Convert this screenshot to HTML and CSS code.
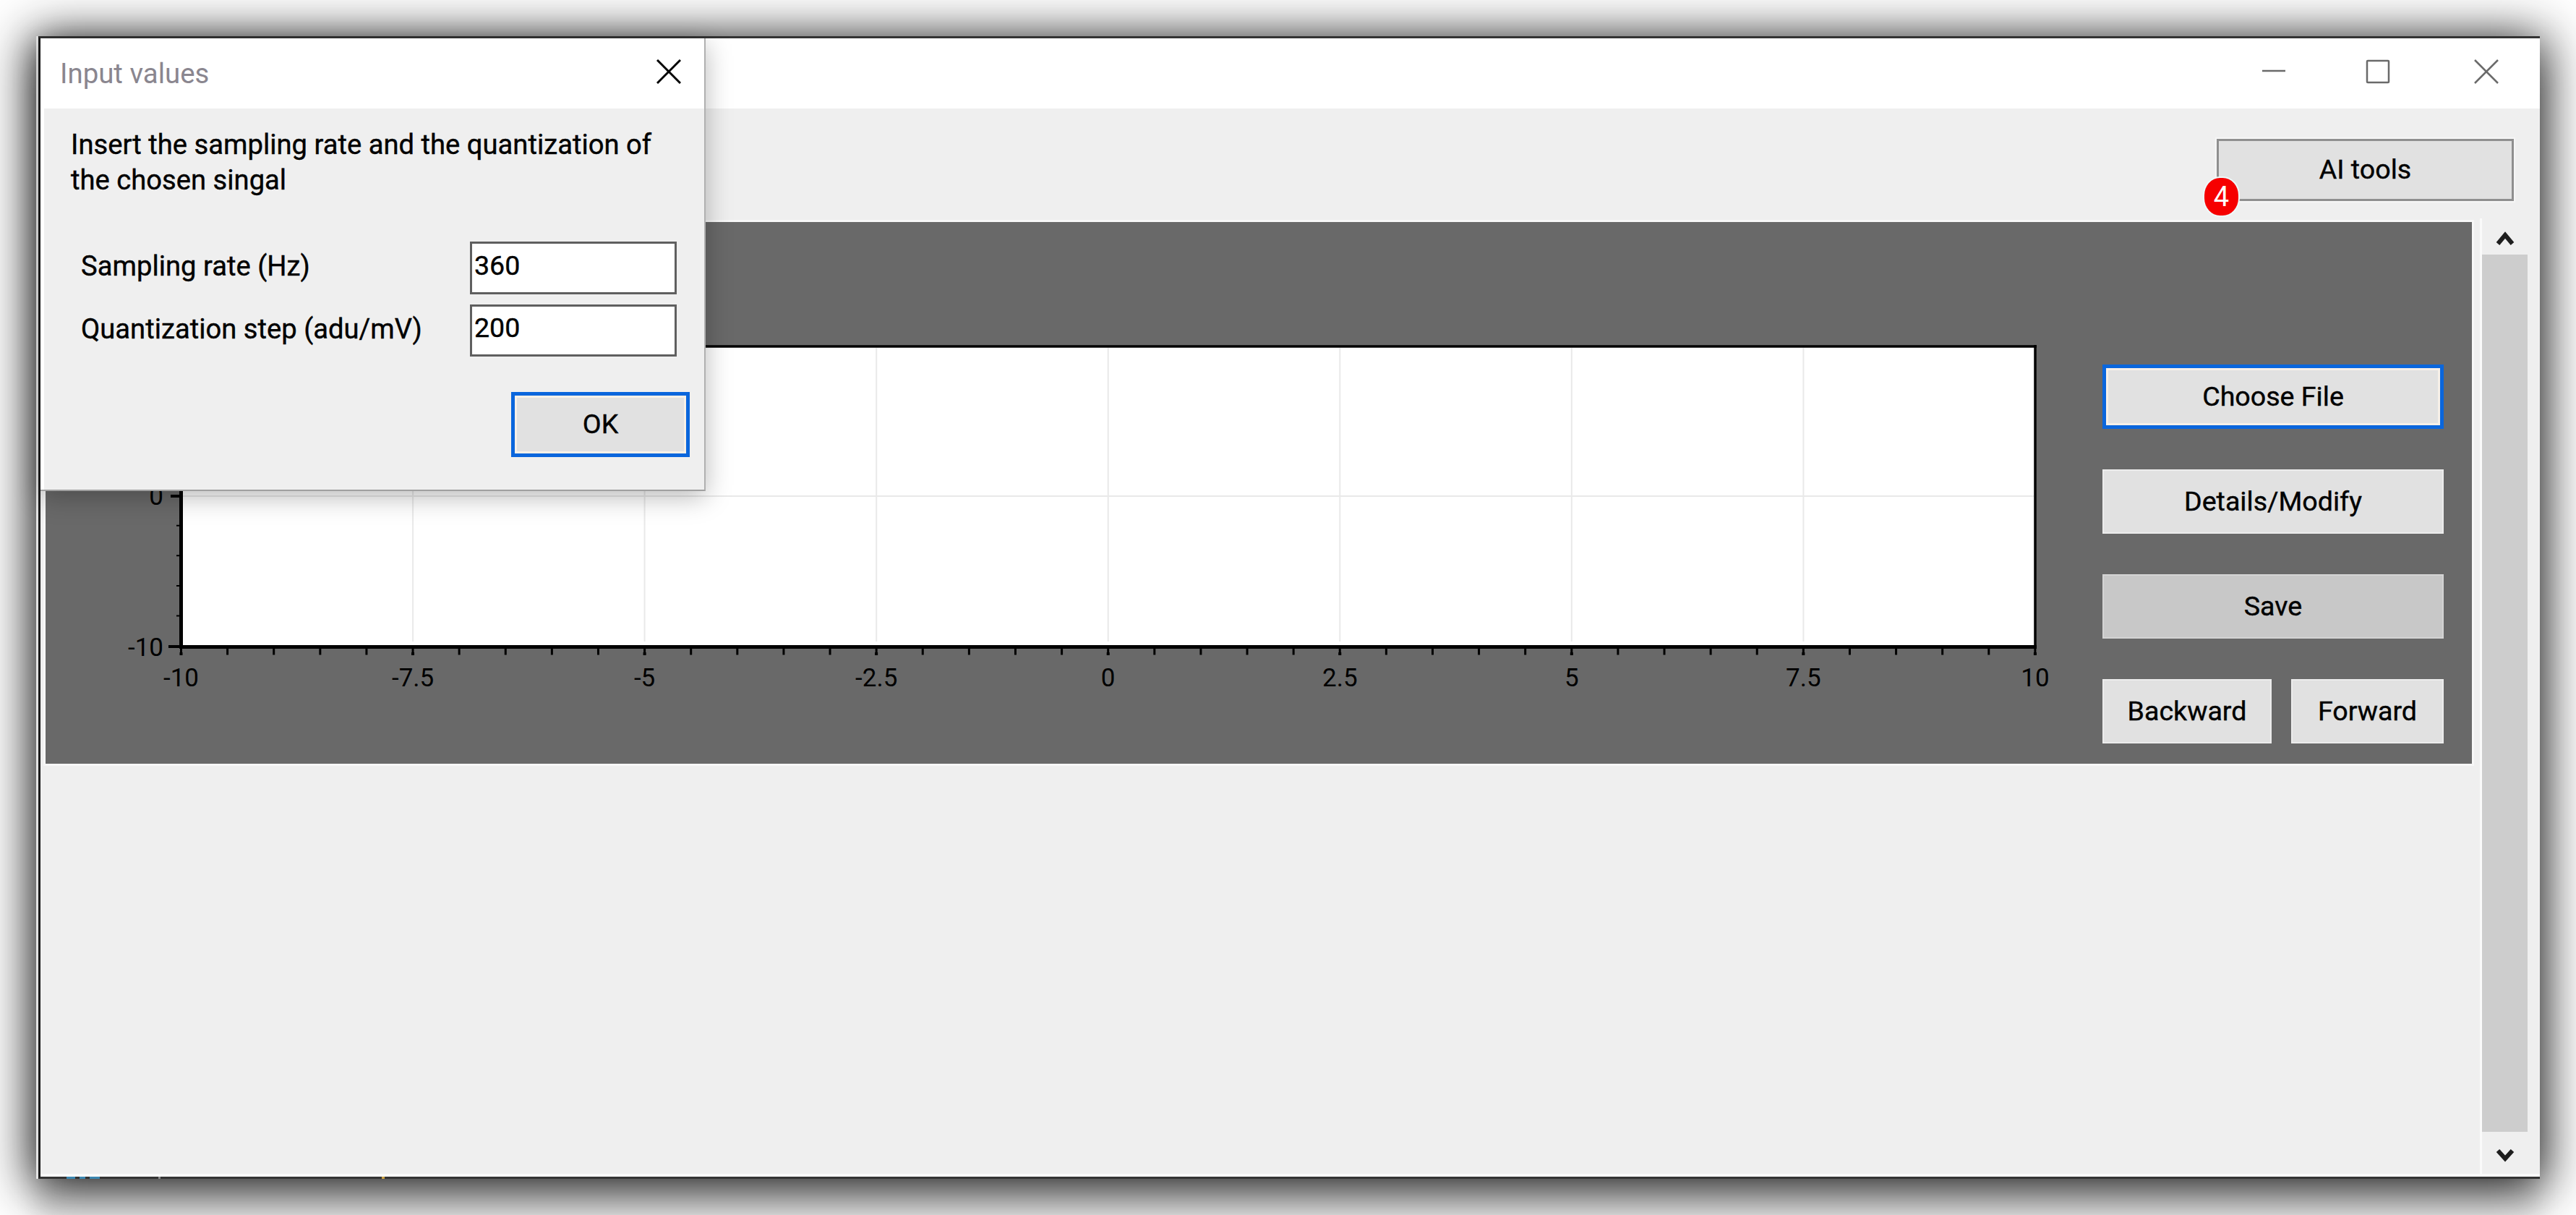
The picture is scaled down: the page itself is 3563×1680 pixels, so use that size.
FILE: index.html
```html
<!DOCTYPE html>
<html lang="en">
<head>
  <meta charset="UTF-8">
  <title>Input values</title>
  <link rel="stylesheet" href="styles.css">
</head>
<body>

  <div class="window">
    <div class="frame">

      <div class="titlebar">
        <svg class="win-icon win-min" viewBox="0 0 34 34"><line x1="1" y1="16" x2="33" y2="16"/></svg>
        <svg class="win-icon win-max" viewBox="0 0 34 34"><rect x="2" y="2" width="30" height="30" rx="1"/></svg>
        <svg class="win-icon win-close" viewBox="0 0 34 34"><line x1="1" y1="1" x2="33" y2="33"/><line x1="33" y1="1" x2="1" y2="33"/></svg>
      </div>

      <div class="client">
        <div class="toolbar">
          <button class="btn btn-ai" type="button">
            AI tools
            <span class="badge">4</span>
          </button>
        </div>

        <div class="main">
          <div class="panel">
            <svg class="chart" viewBox="1 0 2845 749">
              <rect class="plot" x="188.5" y="172" width="2564.5" height="415.5"/>

              <g class="grid">
                <line x1="509.1" y1="174" x2="509.1" y2="580"/>
                <line x1="829.6" y1="174" x2="829.6" y2="580"/>
                <line x1="1150.2" y1="174" x2="1150.2" y2="580"/>
                <line x1="1470.7" y1="174" x2="1470.7" y2="580"/>
                <line x1="1791.3" y1="174" x2="1791.3" y2="580"/>
                <line x1="2111.8" y1="174" x2="2111.8" y2="580"/>
                <line x1="2432.4" y1="174" x2="2432.4" y2="580"/>
                <line x1="191" y1="379" x2="2751" y2="379"/>
              </g>

              <g class="axes">
                <line class="axis-thick" x1="188.5" y1="170" x2="188.5" y2="590"/>
                <line class="axis-thick" x1="186" y1="587.5" x2="2755" y2="587.5"/>
                <line class="axis-thin" x1="187" y1="172" x2="2755" y2="172"/>
                <line class="axis-thin" x1="2753" y1="170" x2="2753" y2="590"/>
              </g>

              <!-- ticks are one thick dashed line each -->
              <line class="tick-minor" x1="187" y1="594" x2="2755" y2="594" stroke-width="9" stroke-dasharray="3 61.11"/>
              <line class="tick-major" x1="186.5" y1="597" x2="2755" y2="597" stroke-width="17" stroke-dasharray="4 316.55"/>
              <line class="tick-minor" x1="184" y1="587" x2="184" y2="172" stroke-width="4" stroke-dasharray="2 39.55"/>
              <line class="tick-major" x1="171" y1="587" x2="186" y2="587"/>
              <line class="tick-major" x1="174" y1="379" x2="186" y2="379"/>
              <line class="tick-major" x1="171" y1="172" x2="186" y2="172"/>

              <g class="labels-x">
                <text x="188.5" y="642">-10</text>
                <text x="509.1" y="642">-7.5</text>
                <text x="829.6" y="642">-5</text>
                <text x="1150.2" y="642">-2.5</text>
                <text x="1470.7" y="642">0</text>
                <text x="1791.3" y="642">2.5</text>
                <text x="2111.8" y="642">5</text>
                <text x="2432.4" y="642">7.5</text>
                <text x="2753" y="642">10</text>
              </g>
              <g class="labels-y">
                <text x="164" y="600">-10</text>
                <text x="164" y="391">0</text>
              </g>
            </svg>

            <div class="side">
              <button class="btn btn-side btn-focus" type="button">Choose File</button>
              <button class="btn btn-side" type="button">Details/Modify</button>
              <button class="btn btn-side btn-off" type="button">Save</button>
              <div class="side-row">
                <button class="btn btn-side btn-back" type="button">Backward</button>
                <button class="btn btn-side btn-next" type="button">Forward</button>
              </div>
            </div>
          </div>

          <div class="scrollbar">
            <div class="scroll-end scroll-up">
              <svg viewBox="0 0 26 20"><path d="M3 17 L13 5 L23 17"/></svg>
            </div>
            <div class="scroll-thumb"></div>
            <div class="scroll-end scroll-down">
              <svg viewBox="0 0 26 20"><path d="M3 4 L13 15 L23 4"/></svg>
            </div>
          </div>
        </div>
      </div>

      <div class="dialog">
        <div class="dialog-title">
          <span>Input values</span>
          <svg class="dialog-close" viewBox="0 0 34 34"><line x1="1" y1="1" x2="33" y2="33"/><line x1="33" y1="1" x2="1" y2="33"/></svg>
        </div>
        <div class="dialog-body">
          <p>Insert the sampling rate and the quantization of<br>the chosen singal</p>
          <div class="fields">
            <label for="rate">Sampling rate (Hz)</label>
            <input id="rate" type="text" value="360">
            <label for="step">Quantization step (adu/mV)</label>
            <input id="step" type="text" value="200">
          </div>
          <div class="dialog-actions">
            <button class="btn btn-ok btn-focus" type="button">OK</button>
          </div>
        </div>
      </div>

    </div>
  </div>

</body>
</html>
```

FILE: styles.css
```css
body {
  margin: 0;
  padding: 50px;
  width: 3463px;
  height: 1580px;
  overflow: hidden;
  background: #fff;
  font-family: Roboto, "Noto Sans", sans-serif;
  font-size: 38.2px;
  -webkit-text-stroke: 0.4px #000;
  color: #000;
}

.window {
  height: 100%;
  border-left: 3px solid #e4e4e4;
  box-sizing: border-box;
  box-shadow: 0 8px 64px 6px rgba(0,0,0,0.92), 0 60px 30px rgba(0,0,0,0.09);
}

.frame {
  position: relative;
  height: 100%;
  box-sizing: border-box;
  display: flex;
  flex-direction: column;
  border-left: 3px solid #1c1c1c;
  border-top: 3px solid #333;
  border-bottom: 3px solid #333;
  background: #fff;
}

/* leftovers of the taskbar showing through the bottom edge */
.frame::after {
  content: "";
  position: absolute;
  left: 36px;
  bottom: -3px;
  width: 440px;
  height: 3px;
  background: linear-gradient(90deg, #3a86b0 0 12px, transparent 12px 18px, #3a86b0 18px 26px, transparent 26px 32px, #3a86b0 32px 46px, transparent 46px 127px, #8a8a8a 127px 130px, transparent 130px 436px, #c9a040 436px 440px);
}

.titlebar {
  height: 97px;
  flex: none;
  display: flex;
  align-items: center;
  justify-content: flex-end;
  background: #fff;
}

.win-icon {
  width: 34px;
  height: 34px;
  fill: none;
  stroke: #6a6a6a;
  stroke-width: 2.5;
  position: relative;
  top: -3px;
}

.win-min { margin-right: 110px; }
.win-max { margin-right: 116px; }
.win-close { margin-right: 57px; }

.client {
  flex: 1;
  min-height: 0;
  display: flex;
  flex-direction: column;
  background: #efefef;
  border-bottom: 4px solid #fafafa;
  padding-left: 7px;
}

.toolbar {
  height: 152px;
  flex: none;
  box-sizing: border-box;
  padding: 42px 36px 0 0;
  display: flex;
  justify-content: flex-end;
  align-items: flex-start;
}

.btn {
  font-family: inherit;
  font-size: 37.6px;
  color: #000;
  background: #e1e1e1;
  padding: 0 0 2px;
  border: none;
  box-sizing: border-box;
  -webkit-text-stroke: 0.4px #000;
}

.btn-ai {
  position: relative;
  width: 411px;
  height: 86px;
  border: 3px solid #8f8f8f;
  box-shadow: 0 0 0 2px #f6f6f6;
}

.badge {
  position: absolute;
  left: -20px;
  top: 51px;
  width: 47px;
  height: 52px;
  border-radius: 46%;
  background: #f60000;
  color: #fff;
  font-size: 38px;
  line-height: 52px;
  text-align: center;
  box-shadow: 0 0 0 2px #eefafa;
  -webkit-text-stroke: 0;
}

.main {
  flex: 1;
  min-height: 0;
  display: flex;
  align-items: flex-start;
}

.panel {
  width: 3356px;
  height: 749px;
  flex: none;
  margin-top: 5px;
  margin-right: 11px;
  display: flex;
  justify-content: space-between;
  background: #696969;
  box-shadow: 0 0 0 3px #f7f7f7;
}

.chart {
  width: 2845px;
  height: 749px;
  flex: none;
}

.plot {
  fill: #fff;
}

.grid line {
  stroke: #e9e9e9;
  stroke-width: 2;
}

.axes line {
  stroke: #000;
}

.axis-thick {
  stroke-width: 5;
}

.axis-thin {
  stroke-width: 3.5;
}

.tick-major,
.tick-minor {
  stroke: #000;
}

.tick-major {
  stroke-width: 4;
}

.labels-x text,
.labels-y text {
  font-family: Roboto, "Noto Sans", sans-serif;
  font-size: 35px;
  fill: #000;
}

.labels-x text {
  text-anchor: middle;
}

.labels-y text {
  text-anchor: end;
}

.side {
  width: 472px;
  flex: none;
  margin-right: 39px;
  padding-top: 197px;
  display: flex;
  flex-direction: column;
  gap: 56px;
}

.btn-side {
  width: 100%;
  height: 89px;
  box-shadow: inset 0 0 0 2px #ececec;
}

.btn-off {
  background: #c8c8c8;
  box-shadow: inset 0 0 0 2px #d4d4d4;
}

.btn-focus {
  border: 5px solid #0a66dc;
  box-shadow: inset 0 0 0 3px #f7f0e8;
}

.side-row {
  display: flex;
  justify-content: space-between;
}

.btn-back { width: 234px; }
.btn-next { width: 211px; }

.scrollbar {
  align-self: stretch;
  width: 66px;
  flex: none;
  box-sizing: border-box;
  border-left: 3px solid #fafafa;
  display: flex;
  flex-direction: column;
}

.scroll-end {
  flex: none;
  box-sizing: border-box;
  padding-top: 6px;
  display: flex;
  align-items: center;
  justify-content: center;
}

.scroll-end svg {
  width: 26px;
  height: 20px;
  fill: none;
  stroke: #1e1e1e;
  stroke-width: 6;
}

.scroll-up { height: 50px; }
.scroll-down { height: 58px; }

.scroll-thumb {
  flex: 1;
  background: #cdcdcd;
}

.dialog {
  position: absolute;
  left: 0;
  top: 0;
  width: 920px;
  height: 626px;
  box-sizing: border-box;
  display: flex;
  flex-direction: column;
  border-right: 2px solid #b0b0b0;
  border-bottom: 2px solid #a0a0a0;
  background: #fff;
  box-shadow: 0 8px 34px rgba(0,0,0,0.28);
}

.dialog-title {
  height: 97px;
  flex: none;
  box-sizing: border-box;
  padding: 0 32px 0 27px;
  display: flex;
  align-items: center;
  justify-content: space-between;
  color: #8a868f;
  font-size: 38.4px;
  -webkit-text-stroke: 0;
}

.dialog-close {
  width: 34px;
  height: 34px;
  fill: none;
  stroke: #000;
  stroke-width: 3;
  position: relative;
  top: -3px;
}

.dialog-body {
  flex: 1;
  background: #efefef;
  margin-left: 5px;
  padding: 26px 20px 0 37px;
}

.dialog-body p {
  margin: 0 0 60px;
  line-height: 49px;
}

.fields {
  display: grid;
  grid-template-columns: 1fr 286px;
  grid-template-rows: 73px 72px;
  row-gap: 14px;
  align-items: center;
  padding-left: 14px;
  padding-right: 18px;
}

.fields label {
  padding-bottom: 5px;
}

.fields input {
  width: 100%;
  height: 100%;
  box-sizing: border-box;
  margin: 0;
  padding: 0 0 8px 3px;
  border: 3px solid #5f5f5f;
  border-radius: 0;
  outline: none;
  background: #fff;
  font-family: inherit;
  font-size: 37.6px;
  color: #000;
  -webkit-text-stroke: 0.4px #000;
}

.dialog-actions {
  margin-top: 49px;
  display: flex;
  justify-content: flex-end;
}

.btn-ok {
  width: 247px;
  height: 90px;
}
```
